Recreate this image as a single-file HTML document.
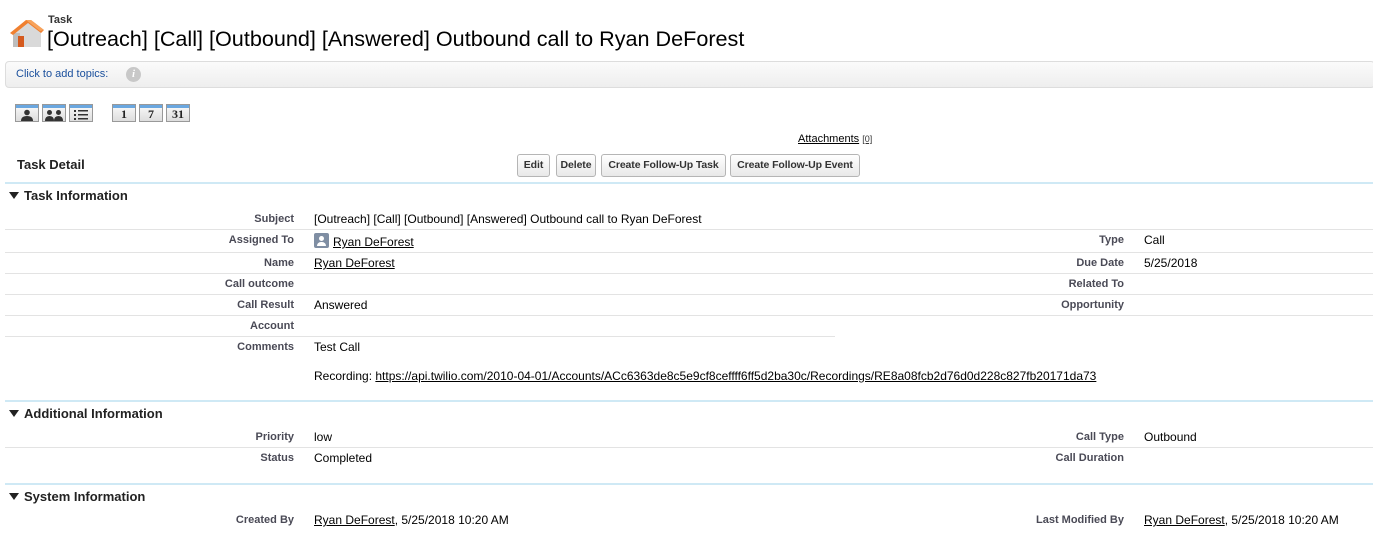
<!DOCTYPE html>
<html><head><meta charset="utf-8"><style>
*{margin:0;padding:0;box-sizing:border-box}
body{width:1373px;height:541px;background:#fff;font-family:"Liberation Sans",Arial,sans-serif;position:relative;overflow:hidden;color:#000}
.a{position:absolute;white-space:nowrap}
.lbl{position:absolute;font-size:11px;font-weight:bold;color:#4a4a56;text-align:right;white-space:nowrap;margin-top:1px}
.val{position:absolute;font-size:12px;color:#000;white-space:nowrap}
u{text-decoration:underline}
.sep{position:absolute;height:1px;background:#e3e3e3}
.sec{position:absolute;left:5px;right:0;height:2px;background:#cfe9f5}
.sh{position:absolute;left:9px;font-size:13px;font-weight:bold;color:#222;margin-top:1px}
.sh:before{content:"";display:inline-block;width:0;height:0;border-left:5px solid transparent;border-right:5px solid transparent;border-top:7px solid #222;margin-right:5px;vertical-align:1px}
.btn{position:absolute;top:154px;height:23px;border:1px solid #b5b5b5;border-radius:3px;background:linear-gradient(#fff,#e8e8e8);font-size:10.5px;font-weight:bold;color:#333;line-height:21px;text-align:center;letter-spacing:-0.1px}
.ib{position:absolute;top:104px;width:24px;height:18px;border:1px solid #999;background:linear-gradient(#fafafa,#ddd);font-family:"Liberation Serif",serif;font-weight:bold;font-size:12px;text-align:center;line-height:18px;color:#222}
.ib:before{content:"";position:absolute;left:0;right:0;top:0;height:3px;background:#6aa7e0}
</style></head><body>
<svg class="a" style="left:10px;top:18px" width="34" height="32" viewBox="0 0 34 32">
<path d="M3 14 L17 3 L31 14 L31 29 L3 29 Z" fill="#d9d9d9"/>
<path d="M3 29 L3 15 L10 15 L10 29 Z" fill="#bdbdbd"/>
<rect x="8" y="18" width="6" height="11" fill="#d55a1e"/>
<path d="M0 15 L16 2 L21 2 L34 12 L31 15 L18 5 L3 17 Z" fill="#f08030"/>
<path d="M16 2 L21 2 L34 12 L30 13 Z" fill="#f7a35c"/>
</svg>
<div class="a" style="left:48px;top:14px;font-size:11px;font-weight:bold;color:#333">Task</div>
<div class="a" style="left:47px;top:26px;font-size:21.6px;color:#000">[Outreach] [Call] [Outbound] [Answered] Outbound call to Ryan DeForest</div>
<div class="a" style="left:5px;top:61px;width:1370px;height:27px;border:1px solid #ddd;border-radius:4px;background:linear-gradient(#fbfbfb,#eeeeee)"></div>
<div class="a" style="left:16px;top:68px;font-size:11px;color:#1a4f9c">Click to add topics:</div>
<div class="a" style="left:126px;top:67px;width:15px;height:15px;border-radius:50%;background:#c8c8c8;color:#fff;font-size:11px;font-weight:bold;font-style:italic;text-align:center;line-height:15px;font-family:'Liberation Serif',serif">i</div>
<div class="ib" style="left:15px"><svg width="12" height="12" viewBox="0 0 12 12" style="position:absolute;left:5px;top:4px"><circle cx="6" cy="3.5" r="2.8" fill="#333"/><path d="M0 12 Q0 7 6 7 Q12 7 12 12Z" fill="#333"/></svg></div>
<div class="ib" style="left:42px"><svg width="18" height="12" viewBox="0 0 18 12" style="position:absolute;left:2px;top:4px"><circle cx="4.5" cy="3.5" r="2.5" fill="#333"/><path d="M0 12 Q0 7 4.5 7 Q9 7 9 12Z" fill="#333"/><circle cx="13.5" cy="3.5" r="2.5" fill="#333"/><path d="M9 12 Q9 7 13.5 7 Q18 7 18 12Z" fill="#333"/></svg></div>
<div class="ib" style="left:69px"><svg width="14" height="10" viewBox="0 0 14 10" style="position:absolute;left:4px;top:5px"><g fill="#333"><rect x="0" y="0" width="2" height="2"/><rect x="4" y="0" width="10" height="1.5"/><rect x="0" y="4" width="2" height="2"/><rect x="4" y="4" width="10" height="1.5"/><rect x="0" y="8" width="2" height="2"/><rect x="4" y="8" width="10" height="1.5"/></g></svg></div>
<div class="ib" style="left:112px">1</div>
<div class="ib" style="left:139px">7</div>
<div class="ib" style="left:166px">31</div>
<div class="a" style="left:798px;top:133px;font-size:11px;color:#000"><u>Attachments</u> <span style="font-size:9px;color:#333"><u>[0]</u></span></div>
<div class="a" style="left:17px;top:157px;font-size:13px;font-weight:bold;color:#222">Task Detail</div>
<div class="btn" style="left:517px;width:33px">Edit</div>
<div class="btn" style="left:556px;width:40px">Delete</div>
<div class="btn" style="left:601px;width:125px">Create Follow-Up Task</div>
<div class="btn" style="left:730px;width:130px">Create Follow-Up Event</div>

<div class="sec" style="top:182px"></div>
<div class="sh" style="top:187px">Task Information</div>

<div class="lbl" style="right:1079px;top:212px">Subject</div>
<div class="val" style="left:314px;top:212px">[Outreach] [Call] [Outbound] [Answered] Outbound call to Ryan DeForest</div>
<div class="sep" style="left:5px;right:0;top:229px"></div>
<div class="lbl" style="right:1079px;top:233px">Assigned To</div>
<div class="a" style="left:314px;top:233px;width:15px;height:15px;background:#7f8ea3;border-radius:2px"><div style="position:absolute;left:5px;top:3px;width:5px;height:5px;border-radius:50%;background:#fff"></div><div style="position:absolute;left:3px;top:9px;width:9px;height:4px;border-radius:4px 4px 0 0;background:#fff"></div></div>
<div class="val" style="left:333px;top:235px"><u>Ryan DeForest</u></div>
<div class="lbl" style="right:249px;top:233px">Type</div>
<div class="val" style="left:1144px;top:233px">Call</div>
<div class="sep" style="left:5px;right:0;top:252px"></div>
<div class="lbl" style="right:1079px;top:256px">Name</div>
<div class="val" style="left:314px;top:256px"><u>Ryan DeForest</u></div>
<div class="lbl" style="right:249px;top:256px">Due Date</div>
<div class="val" style="left:1144px;top:256px">5/25/2018</div>
<div class="sep" style="left:5px;right:0;top:273px"></div>
<div class="lbl" style="right:1079px;top:277px">Call outcome</div>
<div class="lbl" style="right:249px;top:277px">Related To</div>
<div class="sep" style="left:5px;right:0;top:294px"></div>
<div class="lbl" style="right:1079px;top:298px">Call Result</div>
<div class="val" style="left:314px;top:298px">Answered</div>
<div class="lbl" style="right:249px;top:298px">Opportunity</div>
<div class="sep" style="left:5px;right:0;top:315px"></div>
<div class="lbl" style="right:1079px;top:319px">Account</div>
<div class="sep" style="left:5px;width:830px;top:336px"></div>
<div class="lbl" style="right:1079px;top:340px">Comments</div>
<div class="val" style="left:314px;top:340px">Test Call</div>
<div class="val" style="left:314px;top:369px">Recording: <u>https://api.twilio.com/2010-04-01/Accounts/ACc6363de8c5e9cf8ceffff6ff5d2ba30c/Recordings/RE8a08fcb2d76d0d228c827fb20171da73</u></div>

<div class="sec" style="top:400px"></div>
<div class="sh" style="top:405px">Additional Information</div>
<div class="lbl" style="right:1079px;top:430px">Priority</div>
<div class="val" style="left:314px;top:430px">low</div>
<div class="lbl" style="right:249px;top:430px">Call Type</div>
<div class="val" style="left:1144px;top:430px">Outbound</div>
<div class="sep" style="left:5px;right:0;top:447px"></div>
<div class="lbl" style="right:1079px;top:451px">Status</div>
<div class="val" style="left:314px;top:451px">Completed</div>
<div class="lbl" style="right:249px;top:451px">Call Duration</div>

<div class="sec" style="top:483px"></div>
<div class="sh" style="top:488px">System Information</div>
<div class="lbl" style="right:1079px;top:513px">Created By</div>
<div class="val" style="left:314px;top:513px"><u>Ryan DeForest</u>, 5/25/2018 10:20 AM</div>
<div class="lbl" style="right:249px;top:513px">Last Modified By</div>
<div class="val" style="left:1144px;top:513px"><u>Ryan DeForest</u>, 5/25/2018 10:20 AM</div>
</body></html>
